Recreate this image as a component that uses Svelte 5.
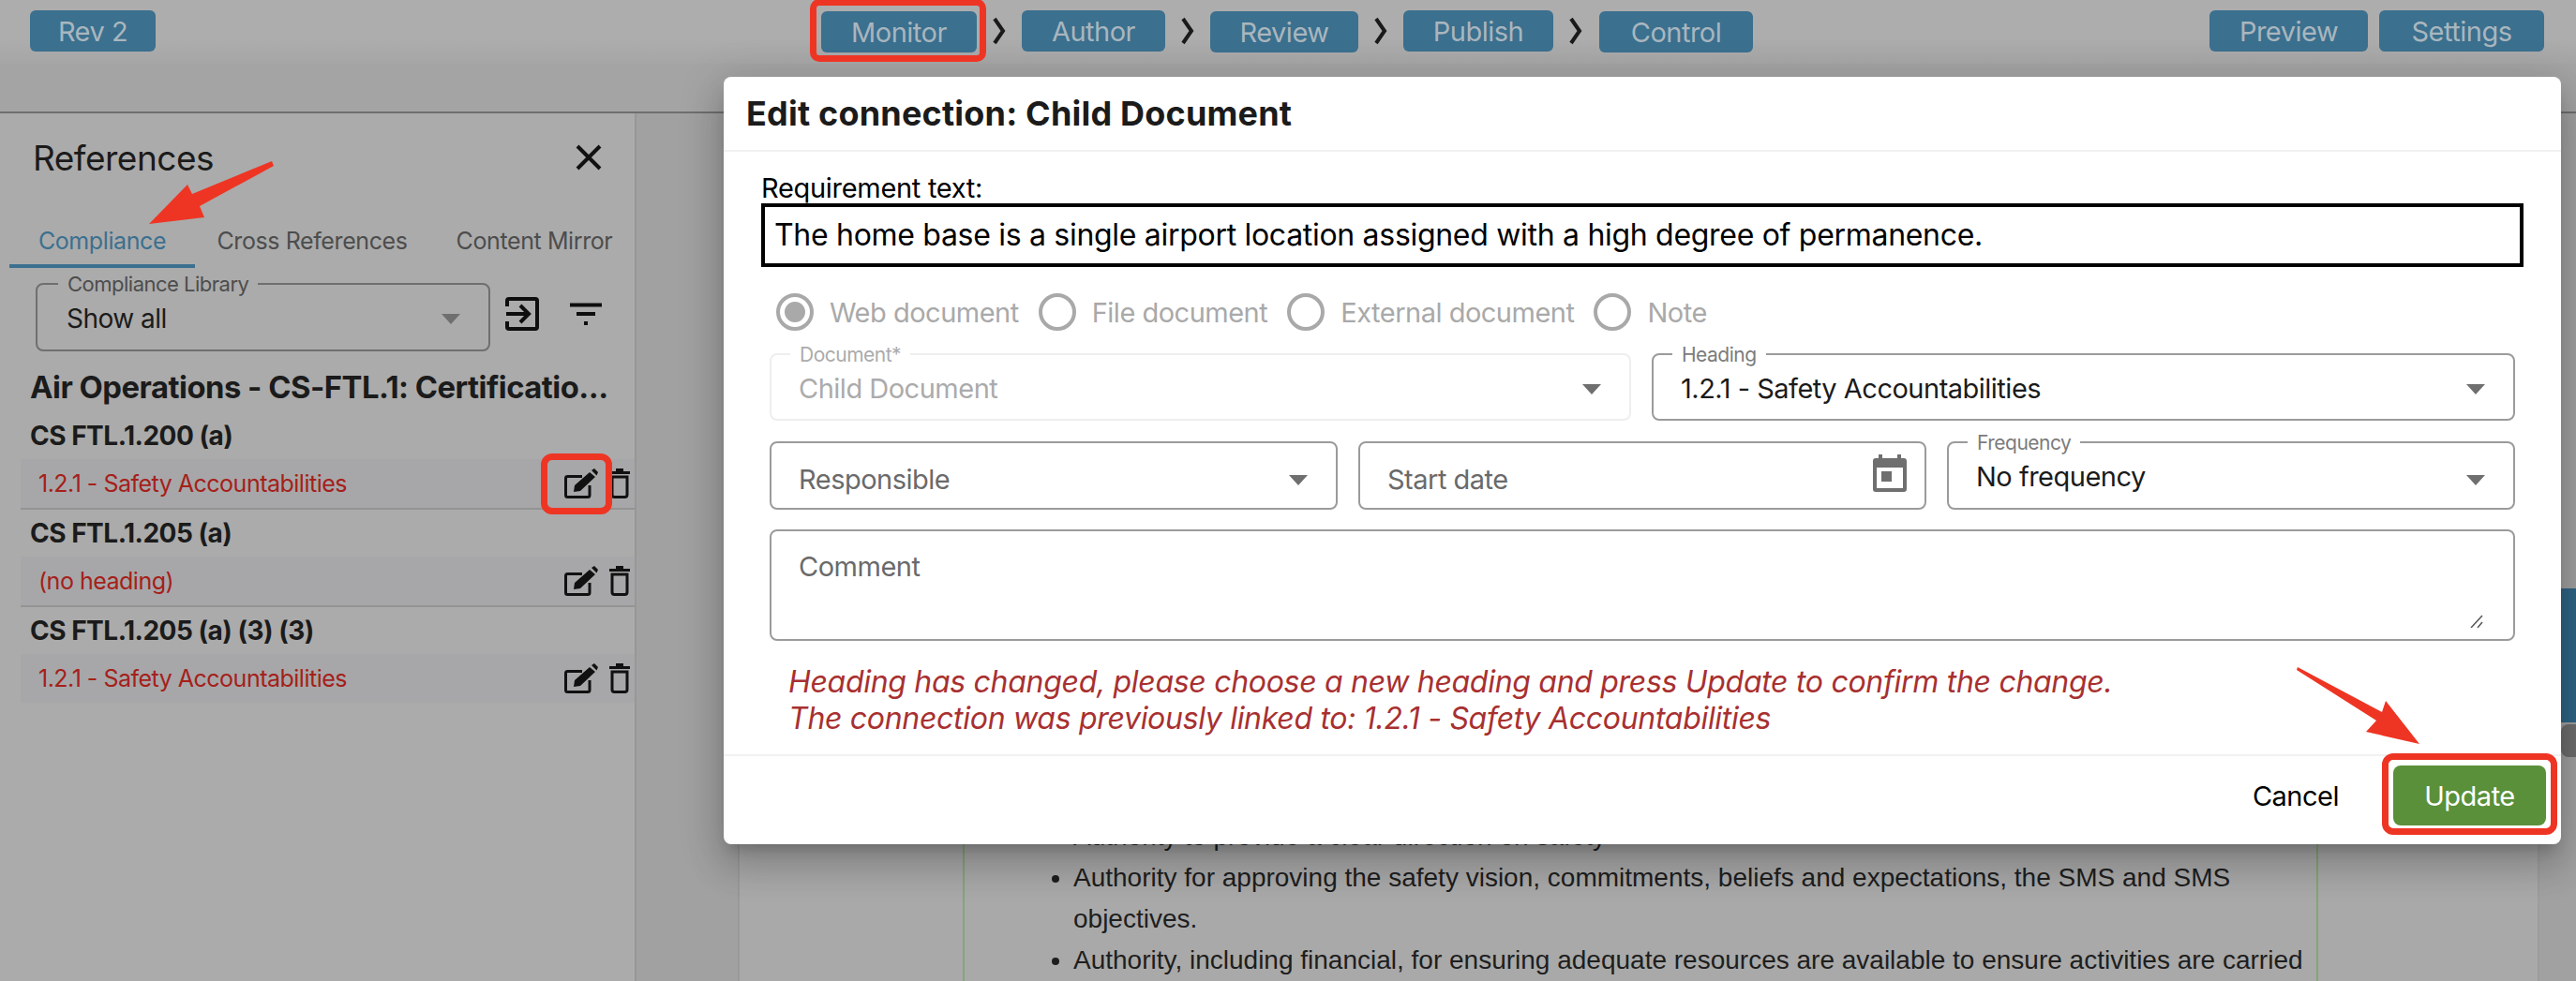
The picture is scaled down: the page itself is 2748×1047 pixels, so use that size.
<script>
  const steps = ["Monitor", "Author", "Review", "Publish", "Control"];
  const radios = [
    { label: "Web document", on: true },
    { label: "File document" },
    { label: "External document" },
    { label: "Note" }
  ];
  const refs = [
    { code: "CS FTL.1.200 (a)", heading: "1.2.1 - Safety Accountabilities" },
    { code: "CS FTL.1.205 (a)", heading: "(no heading)" },
    { code: "CS FTL.1.205 (a) (3) (3)", heading: "1.2.1 - Safety Accountabilities" }
  ];
</script>

<div class="page">
  <header class="topbar">
    <div><button class="btn rev">Rev 2</button></div>
    <nav class="steps">
      {#each steps as step, i}
        <button class="btn" class:low={i % 2 == 0}>{step}</button>
        {#if i < steps.length - 1}
          <svg class="chev" viewBox="0 0 48 44"><path d="M19 9 l9 13 l-9 13" /></svg>
        {/if}
      {/each}
    </nav>
    <div class="actions">
      <button class="btn">Preview</button>
      <button class="btn">Settings</button>
    </div>
  </header>
  <div class="subbar"></div>

  <div class="content">
    <aside class="sidebar">
      <div class="side-head">
        <h2>References</h2>
        <svg class="close" viewBox="0 0 28 28"><path d="M2 2 L26 26 M26 2 L2 26" /></svg>
      </div>
      <div class="tabs">
        <span class="tab active">Compliance</span>
        <span class="tab">Cross References</span>
        <span class="tab">Content Mirror</span>
      </div>
      <div class="filter-row">
        <div class="field lib">
          <span class="legend dim">Compliance Library</span>
          <span class="val">Show all</span>
          <i class="caret"></i>
        </div>
        <svg class="tool login" viewBox="0 0 36 36">
          <path d="M2 10 V4 a2 2 0 0 1 2 -2 H32 a2 2 0 0 1 2 2 V32 a2 2 0 0 1 -2 2 H4 a2 2 0 0 1 -2 -2 V26" />
          <path d="M1 18 H24 M16 9 L25 18 L16 27" />
        </svg>
        <svg class="tool funnel" viewBox="0 0 36 25">
          <path d="M1 2.5 H35 M8 12 H28 M16 22 H20" />
        </svg>
      </div>
      <h3 class="doc-title">Air Operations - CS-FTL.1: Certificatio...</h3>
      {#each refs as ref, i}
        <h4>{ref.code}</h4>
        <div class="ref-row" class:last={i == refs.length - 1}>
          <span>{ref.heading}</span>
          <svg class="edit" viewBox="0 0 36 32">
            <path class="line" d="M19 8.5 H3.5 a2 2 0 0 0 -2 2 V28.500 a2 2 0 0 0 2 2 H25 a2 2 0 0 0 2 -2 V18" />
            <path class="fill" d="M10 25 L11 18 L27 4 L33 9 L17 24 Z M29 2 L32 0 L36 4 L34.500 7.500 Z" />
          </svg>
          <svg class="trash" viewBox="0 0 22 32">
            <path class="line" d="M0 4.500 H22 M7 1.500 H15" />
            <path class="line" d="M3 9 H19 V28 a2.500 2.500 0 0 1 -2.500 2.500 H5.500 a2.500 2.500 0 0 1 -2.500 -2.500 Z" />
          </svg>
        </div>
      {/each}
    </aside>

    <main class="stage">
      <section class="sheet">
        <ul>
          <li>Authority to provide a clear direction on safety</li>
          <li>Authority for approving the safety vision, commitments, beliefs and expectations, the SMS and SMS objectives.</li>
          <li>Authority, including financial, for ensuring adequate resources are available to ensure activities are carried</li>
        </ul>
      </section>
    </main>
  </div>

  <div class="edge-blue"></div>
  <div class="edge-thumb"></div>

  <div class="modal">
    <div class="modal-head">Edit connection: Child Document</div>
    <div class="modal-body">
      <div class="req-label">Requirement text:</div>
      <div class="req-box">The home base is a single airport location assigned with a high degree of permanence.</div>

      <div class="radios">
        {#each radios as r}
          <span class="radio"><i class="ring" class:on={r.on}></i>{r.label}</span>
        {/each}
      </div>

      <div class="two">
        <div class="field off">
          <span class="legend white">Document*</span>
          <span class="val">Child Document</span>
          <i class="caret"></i>
        </div>
        <div class="field">
          <span class="legend white">Heading</span>
          <span class="val">1.2.1 - Safety Accountabilities</span>
          <i class="caret"></i>
        </div>
      </div>

      <div class="three">
        <div class="field plain">
          <span class="val hint">Responsible</span>
          <i class="caret"></i>
        </div>
        <div class="field plain">
          <span class="val hint">Start date</span>
          <svg class="cal" viewBox="0 0 36 40">
            <path d="M6 0 H10 V4 H26 V0 H30 V4 H33 a3 3 0 0 1 3 3 V37 a3 3 0 0 1 -3 3 H3 a3 3 0 0 1 -3 -3 V7 a3 3 0 0 1 3 -3 H6 Z M4 14 V36 H32 V14 Z M9 18 H20 V29 H9 Z" fill-rule="evenodd" />
          </svg>
        </div>
        <div class="field freq">
          <span class="legend white">Frequency</span>
          <span class="val">No frequency</span>
          <i class="caret"></i>
        </div>
      </div>

      <div class="field comment">
        <span class="val hint">Comment</span>
        <svg class="grip" viewBox="0 0 14 14"><path d="M1 14 L13 1 M8 14 L13 8" /></svg>
      </div>

      <p class="error">
        Heading has changed, please choose a new heading and press Update to confirm the change.<br />
        The connection was previously linked to: 1.2.1 - Safety Accountabilities
      </p>
    </div>
    <div class="modal-foot">
      <button class="cancel">Cancel</button>
      <button class="update">Update</button>
    </div>
  </div>

  <div class="mark mark-monitor"></div>
  <div class="mark mark-edit"></div>
  <div class="mark mark-update"></div>
  <svg class="arrows" viewBox="0 0 2748 1047">
    <polygon points="292,177 290,172 205,207 200,197 159,239 218,232 213,220" />
    <polygon points="2451,712 2541,760 2545,748 2581,794 2524,781 2535,769 2450,715" />
  </svg>
</div>

<style>
  :global(body) {
    margin: 0;
    background: #ababab;
  }

  * {
    box-sizing: border-box;
  }

  .page {
    position: relative;
    width: 2748px;
    height: 1047px;
    overflow: hidden;
    background: #ababab;
    color: #1b1b1b;
    font-family: Inter, "Noto Sans", sans-serif;
    font-size: 29px;
    letter-spacing: -0.5px;
    display: flex;
    flex-direction: column;
  }

  .topbar {
    height: 68px;
    flex: none;
    display: grid;
    grid-template-columns: 876px 1fr auto;
    padding-right: 34px;
    background: linear-gradient(#adadad 60%, #a6a6a6);
  }

  .topbar > div:first-child {
    padding-left: 32px;
  }

  .btn {
    height: 44px;
    margin-top: 11px;
    padding: 0;
    border: 0;
    border-radius: 6px;
    background: #3b708f;
    color: #a9b6be;
    font: inherit;
    letter-spacing: inherit;
  }

  .btn.low {
    margin-top: 12px;
  }

  .rev {
    width: 134px;
  }

  .steps {
    display: grid;
    grid-template-columns: 166px 48px 153px 48px 158px 48px 160px 49px 164px;
    align-items: start;
  }

  .chev {
    width: 48px;
    height: 44px;
    margin-top: 11px;
    fill: none;
    stroke: #1a1a1a;
    stroke-width: 4;
  }

  .actions {
    display: grid;
    grid-template-columns: 169px 176px;
    gap: 12px;
  }

  .subbar {
    height: 53px;
    flex: none;
    background: #a4a4a4;
    border-bottom: 2px solid #6f6f6f;
  }

  .content {
    flex: 1;
    display: flex;
    min-height: 0;
  }

  .sidebar {
    width: 679px;
    flex: none;
    border-right: 2px solid #979797;
    overflow: hidden;
  }

  .side-head {
    height: 92px;
    padding: 2px 35px 0;
    display: flex;
    align-items: center;
    justify-content: space-between;
  }

  h2 {
    margin: 0;
    font-size: 37px;
    font-weight: 400;
  }

  .close {
    width: 28px;
    height: 28px;
    fill: none;
    stroke: #111;
    stroke-width: 4;
  }

  .tabs {
    margin-left: 10px;
    height: 73px;
    display: grid;
    grid-template-columns: 198px 250px 224px;
  }

  .tab {
    padding-top: 29px;
    text-align: center;
    font-size: 25px;
    letter-spacing: -0.4px;
    color: #4d4d4d;
    white-space: nowrap;
  }

  .tab.active {
    color: #3b708f;
    border-bottom: 4px solid #3b708f;
  }

  .filter-row {
    display: flex;
    align-items: flex-start;
    margin: 16px 0 0 38px;
  }

  .field {
    position: relative;
    height: 72px;
    border: 2px solid #9b9b9b;
    border-radius: 8px;
    background: #fff;
  }

  .lib {
    width: 485px;
    height: 73px;
    border-color: #6f6f6f;
    background: transparent;
    font-size: 28px;
  }

  .lib .val {
    left: 31px;
  }

  .legend {
    position: absolute;
    left: 20px;
    top: -13px;
    padding: 0 10px;
    font-size: 21px;
    line-height: 26px;
    color: #7c7c7c;
    white-space: nowrap;
  }

  .legend.dim {
    left: 22px;
    top: -14px;
    font-size: 22px;
    background: #ababab;
    color: #4d4d4d;
  }

  .val {
    position: absolute;
    left: 29px;
    top: 18px;
    line-height: 36px;
    white-space: nowrap;
  }

  .caret {
    position: absolute;
    right: 30px;
    top: 31px;
    width: 0;
    height: 0;
    border-left: 10px solid transparent;
    border-right: 10px solid transparent;
    border-top: 11px solid #6f6f6f;
  }

  .tool {
    fill: none;
    stroke: #0e0e0e;
    stroke-width: 4;
  }

  .login {
    width: 36px;
    height: 36px;
    margin: 15px 0 0 16px;
  }

  .funnel {
    width: 36px;
    height: 25px;
    margin: 21px 0 0 32px;
  }

  .doc-title {
    margin: 14px 0 0 32px;
    height: 51px;
    line-height: 48px;
    font-size: 32.800px;
    font-weight: 700;
    white-space: nowrap;
  }

  h4 {
    margin: 0 0 0 32px;
    height: 50px;
    line-height: 50px;
    font-size: 28px;
    font-weight: 700;
  }

  .ref-row {
    margin-left: 22px;
    height: 54px;
    padding: 0 5px 0 19px;
    display: flex;
    align-items: center;
    background: #a7a7a9;
    border-bottom: 2px solid #949494;
    font-size: 25px;
    color: #a5201a;
  }

  .ref-row.last {
    height: 52px;
    border-bottom: 0;
  }

  .ref-row span {
    flex: 1;
  }

  .edit {
    width: 36px;
    height: 32px;
    flex: none;
  }

  .trash {
    width: 22px;
    height: 32px;
    margin-left: 12px;
    flex: none;
  }

  .line {
    fill: none;
    stroke: #111;
    stroke-width: 3;
  }

  .fill {
    fill: #111;
  }

  .stage {
    flex: 1;
    display: flex;
    justify-content: stretch;
    padding: 0 39px 0 108px;
    background: #a1a1a1;
  }

  .sheet {
    flex: 1;
    display: flex;
    flex-direction: column;
    justify-content: flex-end;
    padding: 0 0 0 238px;
    background: #a9a9a9;
    border-left: 2px solid #999;
    border-right: 2px solid #9d9d9d;
    position: relative;
  }

  .sheet ul {
    margin: 0;
    width: 1446px;
    padding: 0 10px 0 116px;
    height: 100%;
    border-left: 2px solid #83a675;
    border-right: 2px solid #83a675;
    display: flex;
    flex-direction: column;
    justify-content: flex-end;
    font-family: "Liberation Sans", Arial, sans-serif;
    font-size: 28px;
    line-height: 44px;
    letter-spacing: 0;
    color: #1e1e1e;
  }

  .edge-blue {
    position: absolute;
    right: 0;
    top: 628px;
    width: 16px;
    height: 143px;
    background: #2f6585;
  }

  .edge-thumb {
    position: absolute;
    right: 0;
    top: 773px;
    width: 16px;
    height: 35px;
    border-radius: 8px 0 0 8px;
    background: #6e6e6e;
  }

  .modal {
    position: absolute;
    left: 772px;
    top: 82px;
    width: 1960px;
    height: 819px;
    display: flex;
    flex-direction: column;
    background: #fff;
    border-radius: 8px;
    box-shadow: 0 11px 15px -7px rgba(0, 0, 0, 0.2), 0 24px 38px 3px rgba(0, 0, 0, 0.14), 0 9px 46px 8px rgba(0, 0, 0, 0.12);
  }

  .modal-head {
    height: 80px;
    flex: none;
    padding-left: 24px;
    line-height: 78px;
    border-bottom: 2px solid #f1f1f1;
    font-size: 36px;
    font-weight: 700;
    letter-spacing: 0.2px;
  }

  .modal-body {
    flex: 1;
    padding: 22px 49px 0;
  }

  .req-label {
    margin: 0 -9px;
    height: 33px;
    line-height: 34px;
    letter-spacing: -0.3px;
    color: #000;
  }

  .req-box {
    margin: 0 -9px;
    height: 68px;
    padding-left: 10px;
    line-height: 60px;
    border: 4px solid #000;
    font-size: 32px;
    letter-spacing: -0.3px;
    color: #000;
  }

  .radios {
    display: flex;
    height: 40px;
    margin: 28px 0 0 7px;
    color: #a9a9a9;
  }

  .radio {
    display: flex;
    align-items: center;
    gap: 17px;
    margin-right: 21px;
    white-space: nowrap;
  }

  .ring {
    width: 40px;
    height: 40px;
    border: 4px solid #a9a9a9;
    border-radius: 50%;
    display: block;
    position: relative;
  }

  .ring.on::after {
    content: "";
    position: absolute;
    inset: 5px;
    border-radius: 50%;
    background: #a9a9a9;
  }

  .two {
    display: grid;
    grid-template-columns: 919px 921px;
    gap: 22px;
    margin-top: 24px;
  }

  .three {
    display: grid;
    grid-template-columns: repeat(3, 606px);
    gap: 22px;
    margin-top: 22px;
  }

  .three .field {
    height: 73px;
  }

  .off {
    border-color: #eee;
  }

  .off .legend,
  .off .val {
    color: #ababab;
  }

  .white {
    background: #fff;
  }

  .val.hint {
    color: #6a6a6a;
    top: 20px;
  }

  .freq .val {
    top: 18px;
  }

  .freq .caret,
  .plain .caret {
    top: 34px;
  }

  .plain .val {
    top: 21px;
  }

  .cal {
    position: absolute;
    right: 19px;
    top: 12px;
    width: 36px;
    height: 40px;
    fill: #6f6f6f;
  }

  .comment {
    height: 119px;
    margin-top: 21px;
  }

  .grip {
    position: absolute;
    right: 32px;
    bottom: 12px;
    width: 14px;
    height: 14px;
    fill: none;
    stroke: #555;
    stroke-width: 1.5;
  }

  .error {
    margin: 24px 0 0 20px;
    font-size: 32px;
    line-height: 39px;
    letter-spacing: -0.3px;
    font-style: italic;
    color: #a83030;
  }

  .modal-foot {
    height: 96px;
    flex: none;
    padding: 10px 16px 0 0;
    display: flex;
    justify-content: flex-end;
    align-items: flex-start;
    border-top: 2px solid #f1f1f1;
  }

  .modal-foot button {
    height: 64px;
    border: 0;
    font: inherit;
    letter-spacing: inherit;
  }

  .cancel {
    background: none;
    color: #000;
    margin-right: 58px;
    padding: 0;
  }

  .update {
    width: 163px;
    background: #5a9039;
    color: #fff;
    border-radius: 8px;
  }

  .mark {
    position: absolute;
    border: 7px solid #ee3524;
    border-radius: 12px;
  }

  .mark-monitor {
    left: 864px;
    top: -1px;
    width: 188px;
    height: 67px;
    border-radius: 10px;
  }

  .mark-edit {
    left: 577px;
    top: 484px;
    width: 76px;
    height: 65px;
  }

  .mark-update {
    left: 2541px;
    top: 804px;
    width: 187px;
    height: 87px;
  }

  .arrows {
    position: absolute;
    inset: 0;
    width: 2748px;
    height: 1047px;
    fill: #ee3524;
  }
</style>
